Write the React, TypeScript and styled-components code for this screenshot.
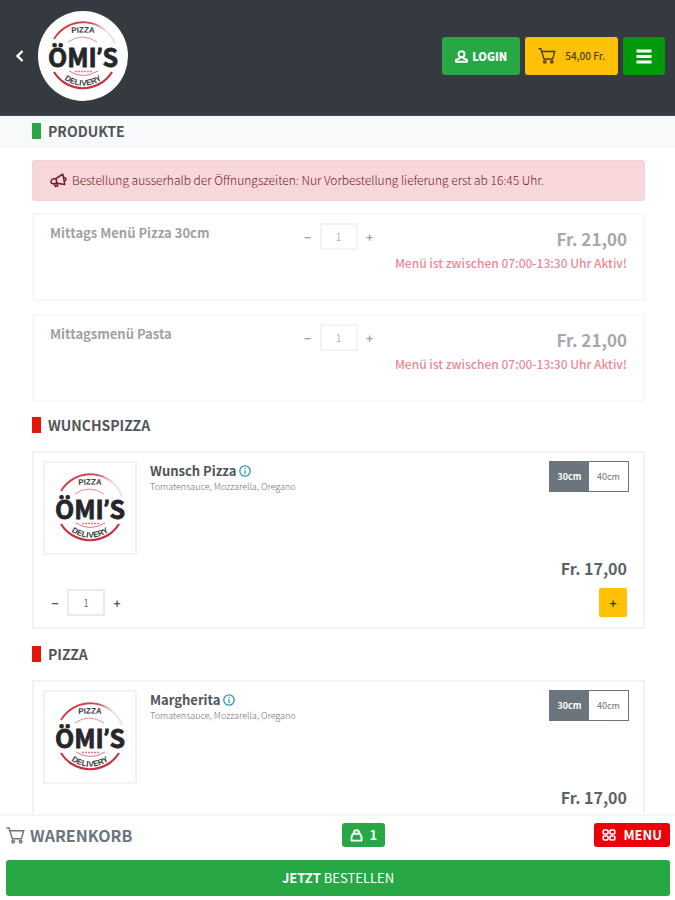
import React, { useId, useState } from 'react';
import styled, { createGlobalStyle, css } from 'styled-components';

const Global = createGlobalStyle`
  *, *::before, *::after { box-sizing: border-box; }
  body {
    margin: 0;
    background: #fff;
    color: #50555a;
    font-family: 'Noto Sans CJK SC', 'Open Sans', sans-serif;
    font-size: 14px;
    line-height: 20px;
  }
  button, input { font: inherit; color: inherit; margin: 0; }
  h1, h2, h3, p { margin: 0; }
`;

const Shell = styled.div`
  display: flex;
  flex-direction: column;
  height: 100vh;
  overflow: hidden;
`;

const Header = styled.header`
  display: flex;
  flex: none;
  align-items: center;
  justify-content: space-between;
  padding: 11px 10px 14px 12px;
  background: #343a40;
  border-bottom: 1px solid #43484e;
`;

const Brand = styled.div`
  display: flex;
  align-items: center;
  gap: 10px;
`;

const BackLink = styled.a`
  display: flex;
  color: #fff;
`;

const LogoDisc = styled.div`
  display: flex;
  padding: 1px;
  border-radius: 50%;
  background: #fff;
`;

const Actions = styled.nav`
  display: flex;
  gap: 5px;
`;

const HeaderButton = styled.button<{ $tone: 'green' | 'yellow' | 'dark' }>`
  display: flex;
  align-items: center;
  gap: 4px;
  height: 38px;
  padding: 0 13px;
  border: 0;
  border-radius: 3px;
  font-size: 11px;
  font-weight: 900;
  color: #fff;
  background: #28a745;
  ${p => p.$tone === 'yellow' && css`background: #ffc107; color: #4a3f1c; gap: 9px; font-weight: 500; font-size: 10px;`}
  ${p => p.$tone === 'dark' && css`background: #009a0b;`}
`;

const Main = styled.main`
  flex: 1;
  min-height: 0;
  overflow-y: auto;
  scrollbar-width: none;
`;

const TitleBar = styled.div`
  padding: 5px 32px 7px;
  background: #f8f9fb;
`;

const SectionTitle = styled.h2<{ $tone?: 'green' | 'red' }>`
  display: flex;
  align-items: center;
  gap: 7px;
  font-size: 14px;
  line-height: 20px;
  font-weight: 700;
  &::before {
    content: '';
    width: 9px;
    height: 16px;
    background: ${p => (p.$tone === 'green' ? '#28a745' : '#e3170a')};
  }
`;

const Content = styled.div`
  display: flex;
  flex-direction: column;
  padding: 12px 30px 24px 32px;
`;

const Alert = styled.div`
  display: flex;
  align-items: center;
  gap: 5px;
  min-height: 41px;
  margin-bottom: 12px;
  padding: 0 17px 2px;
  border: 1px solid #f6d0d5;
  border-radius: 3px;
  background: #f8d7da;
  color: #721c24;
  font-size: 12px;
  font-weight: 300;
`;

const Card = styled.article<{ $disabled?: boolean }>`
  border: 2px solid #f1f2f3;
  ${p => p.$disabled && css`
    display: grid;
    grid-template-columns: 1fr auto 1fr;
    align-items: start;
    min-height: 88px;
    margin-bottom: 13px;
    padding: 8px 16px;
    opacity: 0.55;
  `}
`;

const ProductCard = styled(Card)`
  display: flex;
  flex-direction: column;
  justify-content: space-between;
  min-height: 178px;
  padding: 8px 14px 10px 9px;
`;

const Section = styled.section`
  display: flex;
  flex-direction: column;
  gap: 16px;
  padding-bottom: 15px;
`;

const ProductTop = styled.div`
  display: flex;
  align-items: flex-start;
  gap: 13px;
`;

const Thumb = styled.div`
  display: flex;
  padding: 1px;
  border: 2px solid #f1f2f3;
`;

const Info = styled.div`
  flex: 1;
`;

const Name = styled.h3`
  display: flex;
  align-items: center;
  gap: 3px;
  font-size: 13px;
  line-height: 20px;
  font-weight: 700;
`;

const InfoButton = styled.button`
  display: flex;
  padding: 0;
  border: 0;
  background: none;
  color: #2b9bb5;
`;

const Description = styled.p`
  font-size: 9px;
  line-height: 12px;
  font-weight: 300;
  color: #6a6e72;
`;

const SizeGroup = styled.div`
  display: flex;
  border: 1px solid #6c757d;
`;

const SizeButton = styled.button<{ $active: boolean }>`
  width: 39px;
  height: 29px;
  padding: 0;
  border: 0;
  font-size: 9px;
  background: ${p => (p.$active ? '#6c757d' : '#fff')};
  color: ${p => (p.$active ? '#fff' : '#6c757d')};
  font-weight: ${p => (p.$active ? 700 : 400)};
`;

const Price = styled.div<{ $large?: boolean }>`
  color: #5b636a;
  font-size: ${p => (p.$large ? 17 : 16)}px;
  line-height: 24px;
  font-weight: 700;
  text-align: right;
`;

const PriceColumn = styled.div`
  padding-top: 4px;
`;

const Notice = styled.p`
  color: #dc2440;
  font-size: 12px;
  line-height: 24px;
  font-weight: 500;
  text-align: right;
  white-space: nowrap;
`;

const ProductBottom = styled.div`
  display: flex;
  flex-direction: column;
  gap: 8px;
  padding-right: 2px;
`;

const OrderRow = styled.div`
  display: flex;
  align-items: center;
  justify-content: space-between;
`;

const Stepper = styled.div`
  display: flex;
  align-items: center;
`;

const StepButton = styled.button`
  display: flex;
  justify-content: center;
  width: 24px;
  padding: 0;
  border: 0;
  background: none;
  font-size: 12px;
  line-height: 20px;
  font-weight: 700;
`;

const StepInput = styled.input`
  width: 38px;
  height: 27px;
  padding: 0;
  border: 2px solid #e8eaec;
  background: #fff;
  color: #777;
  font-size: 10px;
  text-align: center;
`;

const AddButton = styled.button`
  display: flex;
  align-items: center;
  justify-content: center;
  width: 28px;
  height: 29px;
  padding: 0;
  border: 0;
  border-radius: 2px;
  background: #ffc107;
  color: #343a40;
  font-size: 12px;
  font-weight: 700;
`;

const Footer = styled.footer`
  flex: none;
  padding: 7px 5px 4px 6px;
  border-top: 2px solid #f3f4f5;
  background: #fff;
`;

const FooterRow = styled.div`
  display: flex;
  align-items: center;
  justify-content: space-between;
  margin-bottom: 13px;
`;

const CartTitle = styled.h2`
  display: flex;
  align-items: center;
  gap: 5px;
  color: #6c757d;
  font-size: 16px;
  line-height: 24px;
  font-weight: 700;
`;

const Pill = styled.button<{ $red?: boolean }>`
  display: flex;
  align-items: center;
  gap: 7px;
  height: 24px;
  padding: 0 8px;
  border: 0;
  border-radius: 3px;
  background: ${p => (p.$red ? '#ec0009' : '#28a745')};
  color: #fff;
  font-size: 13px;
  font-weight: 700;
`;

const OrderButton = styled.button`
  width: 100%;
  height: 36px;
  padding: 0;
  border: 0;
  border-radius: 3px;
  background: #28a745;
  color: #fff;
  font-size: 13px;
`;

const LogoWord = styled.text`
  font-family: 'Noto Sans CJK SC', sans-serif;
  font-weight: 700;
  font-size: 25px;
  fill: #25262a;
  stroke: #25262a;
  stroke-width: 0.8px;
`;

const Apostrophe = styled.tspan`
  font-family: Roboto, sans-serif;
`;

const LogoSmall = styled.text`
  font-family: 'Liberation Sans', sans-serif;
  font-weight: 700;
  font-size: 8px;
  fill: #3a3b3f;
`;

function Logo() {
  const id = useId();
  return (
    <svg width="88" height="88" viewBox="1 1 88 88" role="img" aria-label="Ömi's Pizza Delivery">
      <defs>
        <path id={`${id}t`} d="M20 24 Q45 19 70 24" />
        <path id={`${id}b`} d="M20 62 A31 31 0 0 0 70 62" />
        <linearGradient id={`${id}g`} x1="0" x2="1">
          <stop offset="0.1" stopColor="#cf3a46" />
          <stop offset="0.6" stopColor="#cf4a55" />
          <stop offset="0.85" stopColor="#cf4a55" stopOpacity="0.2" />
        </linearGradient>
      </defs>
      <g fill="none">
        <path d="M16 28 A34 34 0 0 1 77 33" stroke={`url(#${id}g)`} strokeWidth="1.8" />
        <path d="M30 31 Q44 21 59 31" stroke="#e58e96" strokeWidth="1" />
        <path d="M16 61 A34 34 0 0 0 74 61" stroke="#c9303d" strokeWidth="2.2" />
        <path d="M31 60 Q45 69 60 60" stroke="#dd7681" strokeWidth="1" />
        <path d="M37 60.5 H54" stroke="#e07a84" strokeWidth="1.6" strokeDasharray="2 1" />
      </g>
      <LogoSmall textAnchor="middle">
        <textPath href={`#${id}t`} startOffset="50%">PIZZA</textPath>
      </LogoSmall>
      <LogoWord x="45" y="56" textAnchor="middle">ÖMI<Apostrophe>’</Apostrophe>S</LogoWord>
      <LogoSmall textAnchor="middle">
        <textPath href={`#${id}b`} startOffset="50%">DELIVERY</textPath>
      </LogoSmall>
    </svg>
  );
}

function CartIcon({ size }: { size: number }) {
  return (
    <svg width={size} height={size} viewBox="0 0 18 18" fill="none" stroke="currentColor" strokeWidth="1.4" aria-hidden="true">
      <path d="M0.5 1.8 H2.8 L6 12 H14.8" />
      <path d="M3.8 4.5 H16.8 L14.6 12" />
      <circle cx="6.8" cy="14.8" r="1.2" />
      <circle cx="13.8" cy="14.8" r="1.2" />
    </svg>
  );
}

function UserIcon() {
  return (
    <svg width="13" height="13" viewBox="0 0 13 13" fill="none" stroke="currentColor" strokeWidth="1.9" strokeLinejoin="round" aria-hidden="true">
      <circle cx="6.5" cy="4.2" r="3" />
      <path d="M4.6 7 V8.4 L1 9.8 V11.7 H12 V9.8 L8.4 8.4 V7" />
    </svg>
  );
}

function Megaphone() {
  return (
    <svg width="17" height="16" viewBox="0 0 17 16" fill="none" stroke="#721c24" strokeWidth="1.5" strokeLinejoin="round" aria-hidden="true">
      <path d="M6 6.5 L12.8 2.2 L14.8 12.6 L6.8 11.2 L3.2 11.8 Q1.2 11.8 1 9.8 Q1 7.6 2.8 7.1 Z" />
      <path d="M6 6.5 L6.8 11.2 M4.2 11.8 L5.4 14.4 L7.6 13.9 L7.2 11.4 M13.6 5.6 Q15.6 5.4 16 7 Q16.2 8.6 14.4 9" />
    </svg>
  );
}

function InfoIcon() {
  return (
    <svg width="12" height="12" viewBox="0 0 12 12" fill="none" stroke="currentColor" strokeWidth="1.3" aria-hidden="true">
      <circle cx="6" cy="6" r="5.2" />
      <path d="M6 5.2 V9 M6 2.9 V4.2" />
    </svg>
  );
}

function BagIcon() {
  return (
    <svg width="13" height="13" viewBox="0 0 13 13" fill="none" stroke="currentColor" strokeWidth="1.9" strokeLinejoin="round" aria-hidden="true">
      <path d="M2.8 4.8 H10.2 L11.5 8.2 V11.6 H1.5 V8.2 Z" />
      <path d="M4 5 V3.6 Q4 1.3 6.5 1.3 Q9 1.3 9 3.6 V5" />
    </svg>
  );
}

function GridIcon() {
  return (
    <svg width="14" height="12" viewBox="0 0 14 12" fill="none" stroke="currentColor" strokeWidth="1.6" aria-hidden="true">
      <rect x="1.2" y="1" width="4.8" height="4" rx="1" />
      <rect x="8" y="1" width="4.8" height="4" rx="1" />
      <rect x="1.2" y="7" width="4.8" height="4" rx="1" />
      <rect x="8" y="7" width="4.8" height="4" rx="1" />
    </svg>
  );
}

function Quantity({ label, disabled }: { label: string; disabled?: boolean }) {
  const [value, setValue] = useState(1);
  return (
    <Stepper>
      <StepButton disabled={disabled} aria-label="Weniger" onClick={() => setValue(v => Math.max(1, v - 1))}>−</StepButton>
      <StepInput
        aria-label={`Anzahl ${label}`}
        inputMode="numeric"
        disabled={disabled}
        value={value}
        onChange={e => setValue(Number(e.target.value) || 1)}
      />
      <StepButton disabled={disabled} aria-label="Mehr" onClick={() => setValue(v => v + 1)}>+</StepButton>
    </Stepper>
  );
}

function LunchMenu({ name }: { name: string }) {
  return (
    <Card $disabled>
      <Name>{name}</Name>
      <Quantity label={name} disabled />
      <PriceColumn>
        <Price $large>Fr. 21,00</Price>
        <Notice>Menü ist zwischen 07:00-13:30 Uhr Aktiv!</Notice>
      </PriceColumn>
    </Card>
  );
}

function Product({ name }: { name: string }) {
  const [size, setSize] = useState('30cm');
  return (
    <ProductCard>
      <ProductTop>
        <Thumb><Logo /></Thumb>
        <Info>
          <Name>
            {name}
            <InfoButton aria-label={`Info ${name}`}><InfoIcon /></InfoButton>
          </Name>
          <Description>Tomatensauce, Mozzarella, Oregano</Description>
        </Info>
        <SizeGroup role="group" aria-label="Grösse">
          {['30cm', '40cm'].map(s => (
            <SizeButton key={s} $active={s === size} aria-pressed={s === size} onClick={() => setSize(s)}>{s}</SizeButton>
          ))}
        </SizeGroup>
      </ProductTop>
      <ProductBottom>
        <Price>Fr. 17,00</Price>
        <OrderRow>
          <Quantity label={name} />
          <AddButton aria-label="Hinzufügen">+</AddButton>
        </OrderRow>
      </ProductBottom>
    </ProductCard>
  );
}

export default function App() {
  return (
    <>
      <Global />
      <Shell>
        <Header>
          <Brand>
            <BackLink href="#" aria-label="Zurück">
              <svg width="16" height="16" viewBox="0 0 16 16" fill="none" stroke="currentColor" strokeWidth="2.4" aria-hidden="true">
                <path d="M10.5 3 L5.5 8 L10.5 13" />
              </svg>
            </BackLink>
            <LogoDisc><Logo /></LogoDisc>
          </Brand>
          <Actions>
            <HeaderButton $tone="green"><UserIcon />LOGIN</HeaderButton>
            <HeaderButton $tone="yellow"><CartIcon size={18} />54,00 Fr.</HeaderButton>
            <HeaderButton $tone="dark" aria-label="Menü">
              <svg width="16" height="15" viewBox="0 0 16 15" fill="none" stroke="currentColor" strokeWidth="3" aria-hidden="true">
                <path d="M0.5 2 H15.5 M0.5 7.5 H15.5 M0.5 13 H15.5" />
              </svg>
            </HeaderButton>
          </Actions>
        </Header>
        <Main>
          <TitleBar><SectionTitle $tone="green">PRODUKTE</SectionTitle></TitleBar>
          <Content>
            <Alert role="alert">
              <Megaphone />
              Bestellung ausserhalb der Öffnungszeiten: Nur Vorbestellung lieferung erst ab 16:45 Uhr.
            </Alert>
            <LunchMenu name="Mittags Menü Pizza 30cm" />
            <LunchMenu name="Mittagsmenü Pasta" />
            <Section>
              <SectionTitle>WUNCHSPIZZA</SectionTitle>
              <Product name="Wunsch Pizza" />
            </Section>
            <Section>
              <SectionTitle>PIZZA</SectionTitle>
              <Product name="Margherita" />
            </Section>
          </Content>
        </Main>
        <Footer>
          <FooterRow>
            <CartTitle><CartIcon size={19} />WARENKORB</CartTitle>
            <Pill><BagIcon />1</Pill>
            <Pill $red><GridIcon />MENU</Pill>
          </FooterRow>
          <OrderButton><b>JETZT</b> BESTELLEN</OrderButton>
        </Footer>
      </Shell>
    </>
  );
}
